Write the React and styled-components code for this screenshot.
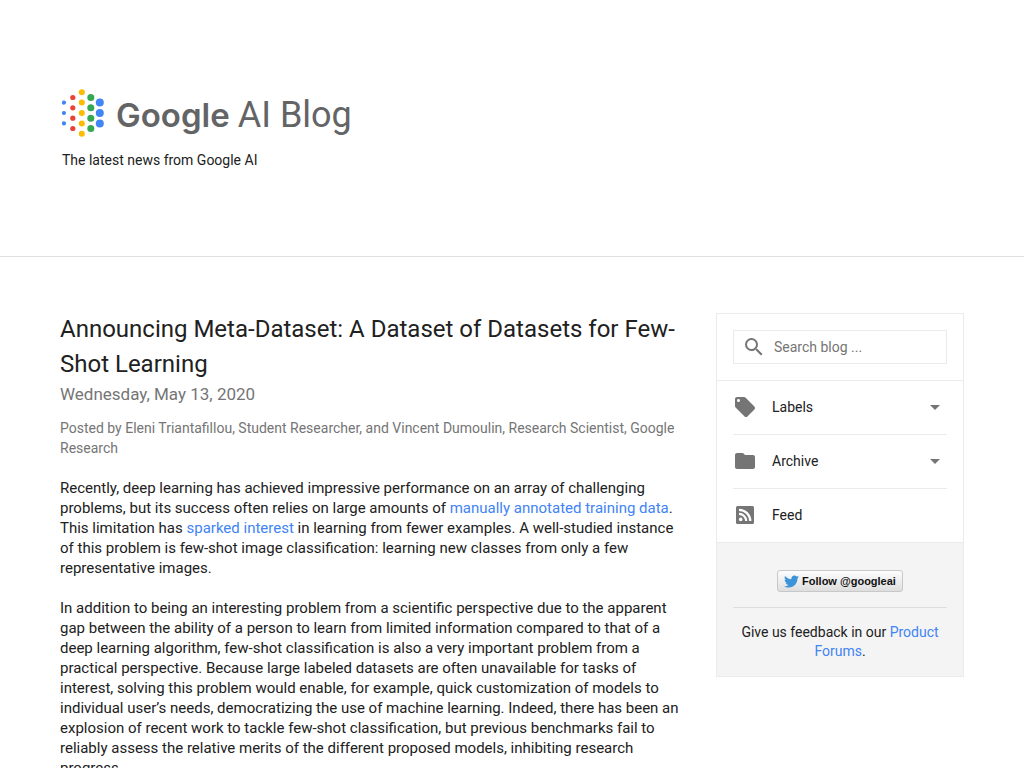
import React from "react";
import styled, { createGlobalStyle } from "styled-components";
import { MdSearch, MdLocalOffer, MdFolder, MdArrowDropDown } from "react-icons/md";
import { FaTwitter } from "react-icons/fa";

const GlobalStyle = createGlobalStyle`
  *, *::before, *::after { box-sizing: border-box; }
  body {
    margin: 0;
    background: #fff;
    color: #212121;
    font-family: Roboto, "Liberation Sans", sans-serif;
    font-size: 14px;
    line-height: 20px;
  }
`;

const Header = styled.header`
  padding: 88px 60px 86px 62px;
  border-bottom: 1px solid #e0e0e0;
`;

const Brand = styled.a`
  display: flex;
  align-items: center;
  height: 50px;
  color: #636466;
  text-decoration: none;
  white-space: nowrap;
`;

const Dots = styled.svg`
  flex: none;
  width: 42px;
  height: 48px;
  margin-right: 12px;
`;

const BrandText = styled.span`
  display: flex;
  align-items: baseline;
  gap: 8px;
  padding-top: 4px;
  font-size: 36px;
  line-height: 50px;
`;

const Wordmark = styled.span`
  font-family: Inter, "Liberation Sans", sans-serif;
  font-size: 33px;
  font-weight: 600;
`;

const Tagline = styled.p`
  margin: 12px 0 0;
`;

const Page = styled.div`
  display: flex;
  align-items: flex-start;
  gap: 36px;
  padding: 55px 60px;
`;

const Article = styled.article`
  flex: 1;
  min-width: 0;
  font-size: 15px;
`;

const Title = styled.h2`
  margin: 0;
  font-size: 24px;
  font-weight: 400;
  line-height: 35px;
`;

const PostDate = styled.div`
  color: #757575;
  font-size: 17px;
  line-height: 24px;
`;

const Byline = styled.p`
  margin: 12px 0 20px;
  color: #757575;
  font-size: 14px;
`;

const Paragraph = styled.p`
  margin: 0 0 20px;
`;

const TextLink = styled.a`
  color: #4184f3;
  text-decoration: none;
`;

const Sidebar = styled.aside`
  flex: none;
  width: 248px;
  margin-top: 1px;
  border: 1px solid #ebebeb;
`;

const SearchArea = styled.form`
  padding: 16px;
  border-bottom: 1px solid #ebebeb;
`;

const SearchBox = styled.label`
  display: flex;
  align-items: center;
  gap: 8px;
  height: 34px;
  padding: 0 8px;
  border: 1px solid #ebebeb;
  color: #757575;
`;

const SearchInput = styled.input`
  flex: 1;
  min-width: 0;
  padding: 0;
  border: 0;
  outline: 0;
  background: none;
  color: #212121;
  font: inherit;
  &::placeholder { color: #757575; opacity: 1; }
`;

const Menu = styled.ul`
  margin: 0;
  padding: 0 16px;
  list-style: none;
`;

const MenuItem = styled.li`
  & + & { border-top: 1px solid #ebebeb; }
`;

const MenuButton = styled.button`
  display: flex;
  align-items: center;
  gap: 15px;
  width: 100%;
  height: 53px;
  padding: 0 0 1px;
  border: 0;
  background: none;
  color: #212121;
  font: inherit;
  text-align: left;
  text-decoration: none;
  cursor: pointer;
  svg { flex: none; color: #757575; }
  span { flex: 1; }
`;

const Extras = styled.div`
  padding: 27px 16px 15px;
  border-top: 1px solid #ebebeb;
  background: #f4f4f4;
  text-align: center;
`;

const Follow = styled.a`
  display: inline-flex;
  align-items: center;
  gap: 3px;
  height: 22px;
  padding: 0 6px;
  border: 1px solid #c8c8c8;
  border-radius: 3px;
  background: linear-gradient(#fdfdfd, #dedede);
  color: #111;
  font: 700 11px/20px "Liberation Sans", sans-serif;
  text-decoration: none;
  vertical-align: top;
  svg { color: #3b94d9; }
`;

const Feedback = styled.p`
  margin: 15px 0 0;
  padding-top: 15px;
  border-top: 1px solid #dedede;
  line-height: 19px;
`;

const columns = [
  { x: 2, r: 2.1, fill: "#4285f4", ys: [13.6, 24, 34.4] },
  { x: 10.8, r: 2.6, fill: "#ea4335", ys: [8.5, 18.8, 29.2, 39.5] },
  { x: 19.8, r: 3, fill: "#fbbc05", ys: [3.3, 13.6, 24, 34.4, 44.8] },
  { x: 28.8, r: 3.5, fill: "#34a853", ys: [8.5, 18.8, 29.2, 39.5] },
  { x: 37.8, r: 4, fill: "#4285f4", ys: [13.6, 24, 34.4] },
];

function BrandDots() {
  return (
    <Dots viewBox="0 0 42 48" aria-hidden="true">
      {columns.map((c) =>
        c.ys.map((y) => <circle key={`${c.x}-${y}`} cx={c.x} cy={y} r={c.r} fill={c.fill} />)
      )}
    </Dots>
  );
}

function FeedIcon() {
  return (
    <svg width="24" height="24" viewBox="0 0 24 24" aria-hidden="true">
      <rect x="3" y="3" width="18" height="18" rx="1.5" fill="currentColor" />
      <circle cx="7.7" cy="16.4" r="1.8" fill="#fff" />
      <path d="M6 10.9a7.2 7.2 0 0 1 7.2 7.2M6 6.8a11.3 11.3 0 0 1 11.3 11.3" fill="none" stroke="#fff" strokeWidth="2.2" />
    </svg>
  );
}

export default function App() {
  return (
    <>
      <GlobalStyle />
      <Header>
        <Brand href="#">
          <BrandDots />
          <BrandText>
            <Wordmark>Google</Wordmark>
            <span>AI Blog</span>
          </BrandText>
        </Brand>
        <Tagline>The latest news from Google AI</Tagline>
      </Header>
      <Page>
        <Article>
          <Title>Announcing Meta-Dataset: A Dataset of Datasets for Few-Shot Learning</Title>
          <PostDate>Wednesday, May 13, 2020</PostDate>
          <Byline>
            Posted by Eleni Triantafillou, Student Researcher, and Vincent Dumoulin, Research Scientist, Google Research
          </Byline>
          <Paragraph>
            Recently, deep learning has achieved impressive performance on an array of challenging problems, but its
            success often relies on large amounts of{" "}
            <TextLink href="#">manually annotated training data</TextLink>. This limitation has{" "}
            <TextLink href="#">sparked interest</TextLink> in learning from fewer examples. A well-studied instance of
            this problem is few-shot image classification: learning new classes from only a few representative images.
          </Paragraph>
          <Paragraph>
            In addition to being an interesting problem from a scientific perspective due to the apparent gap between
            the ability of a person to learn from limited information compared to that of a deep learning algorithm,
            few-shot classification is also a very important problem from a practical perspective. Because large
            labeled datasets are often unavailable for tasks of interest, solving this problem would enable, for
            example, quick customization of models to individual user’s needs, democratizing the use of machine
            learning. Indeed, there has been an explosion of recent work to tackle few-shot classification, but
            previous benchmarks fail to reliably assess the relative merits of the different proposed models,
            inhibiting research progress.
          </Paragraph>
        </Article>
        <Sidebar>
          <SearchArea>
            <SearchBox>
              <MdSearch size={24} aria-hidden="true" />
              <SearchInput type="text" placeholder="Search blog ..." aria-label="Search blog" />
            </SearchBox>
          </SearchArea>
          <Menu>
            <MenuItem>
              <MenuButton type="button">
                <MdLocalOffer size={24} />
                <span>Labels</span>
                <MdArrowDropDown size={24} />
              </MenuButton>
            </MenuItem>
            <MenuItem>
              <MenuButton type="button">
                <MdFolder size={24} />
                <span>Archive</span>
                <MdArrowDropDown size={24} />
              </MenuButton>
            </MenuItem>
            <MenuItem>
              <MenuButton as="a" href="#">
                <FeedIcon />
                <span>Feed</span>
              </MenuButton>
            </MenuItem>
          </Menu>
          <Extras>
            <Follow href="#">
              <FaTwitter size={15} aria-hidden="true" />
              Follow @googleai
            </Follow>
            <Feedback>
              Give us feedback in our <TextLink href="#">Product Forums</TextLink>.
            </Feedback>
          </Extras>
        </Sidebar>
      </Page>
    </>
  );
}
